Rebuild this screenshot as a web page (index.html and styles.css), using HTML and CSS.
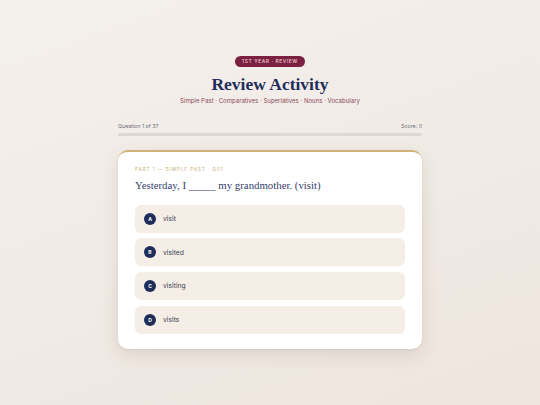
FILE: index.html
```html
<!DOCTYPE html>
<html>
<head>
<meta charset="utf-8">
<link rel="stylesheet" href="styles.css">
</head>
<body>
<main class="page">
  <header class="hero">
    <span class="badge">1ST YEAR · REVIEW</span>
    <h1 class="title">Review Activity</h1>
    <p class="subtitle">Simple Past · Comparatives · Superlatives · Nouns · Vocabulary</p>
  </header>
  <section class="progress">
    <div class="progress-row">
      <span>Question 1 of 37</span>
      <span>Score: 0</span>
    </div>
    <div class="bar"><div class="bar-fill" style="width:0%"></div></div>
  </section>
  <section class="card">
    <div class="eyebrow">PART 1 — SIMPLE PAST · Q01</div>
    <h2 class="question">Yesterday, I _____ my grandmother. (visit)</h2>
    <div class="options">
      <button class="option"><span class="letter">A</span><span class="opt-text">visit</span></button>
      <button class="option"><span class="letter">B</span><span class="opt-text">visited</span></button>
      <button class="option"><span class="letter">C</span><span class="opt-text">visiting</span></button>
      <button class="option"><span class="letter">D</span><span class="opt-text">visits</span></button>
    </div>
  </section>
</main>
</body>
</html>
```
FILE: styles.css
```css
* { box-sizing: border-box; }
html, body { margin: 0; padding: 0; }
body {
  width: 540px;
  height: 405px;
  overflow: hidden;
  background: linear-gradient(160deg, #f4f0ec 0%, #f1ebe6 50%, #eee5de 100%);
  font-family: "Inter", "Noto Sans", sans-serif;
}
.page {
  width: 304px;
  margin: 0 auto;
  padding-top: 56px;
}
.hero {
  display: flex;
  flex-direction: column;
  align-items: center;
}
.badge {
  display: inline-block;
  height: 11px;
  line-height: 11px;
  padding: 0 7px;
  border-radius: 6px;
  background: #7b2040;
  color: #f0c9d2;
  font-size: 5px;
  letter-spacing: 0.55px;
  font-weight: 500;
}
.title {
  margin: 6px 0 0;
  font-family: "Liberation Serif", "DejaVu Serif", serif;
  font-weight: bold;
  font-size: 17.5px;
  line-height: 22px;
  color: #1f2d5b;
}
.subtitle {
  margin: 1px 0 0;
  font-size: 6.05px;
  color: #8c4a5c;
  line-height: 9px;
}
.progress {
  margin-top: 18px;
}
.progress-row {
  display: flex;
  justify-content: space-between;
  font-size: 5.3px;
  color: #6d6e78;
  line-height: 7px;
}
.bar {
  margin-top: 3px;
  height: 2.5px;
  border-radius: 2px;
  background: #dcd8d6;
}
.bar-fill { height: 100%; background: #c9a96b; }
.card {
  margin-top: 14px;
  background: #fff;
  border-radius: 10px;
  border-top: 2px solid #d1b27a;
  padding: 14px 17px 15px;
  box-shadow: 0 6px 18px rgba(90, 60, 40, 0.12), 0 1px 3px rgba(90, 60, 40, 0.08);
}
.eyebrow {
  font-size: 4.7px;
  letter-spacing: 0.9px;
  color: #c8ac78;
  line-height: 7px;
}
.question {
  margin: 5px 0 0;
  font-family: "Liberation Serif", "DejaVu Serif", serif;
  font-weight: normal;
  font-size: 10.8px;
  line-height: 15px;
  color: #34406c;
}
.options {
  margin-top: 12px;
  display: flex;
  flex-direction: column;
  gap: 5.7px;
}
.option {
  display: flex;
  align-items: center;
  gap: 7px;
  height: 28px;
  padding: 0 9px;
  border: none;
  border-radius: 6px;
  background: #f5eee6;
  font-family: inherit;
  text-align: left;
  cursor: pointer;
}
.letter {
  width: 12px;
  height: 12px;
  border-radius: 50%;
  background: #1f2d5b;
  color: #fff;
  font-size: 5px;
  font-weight: 700;
  display: flex;
  align-items: center;
  justify-content: center;
}
.opt-text {
  font-size: 6.8px;
  color: #3b3f55;
}
```
